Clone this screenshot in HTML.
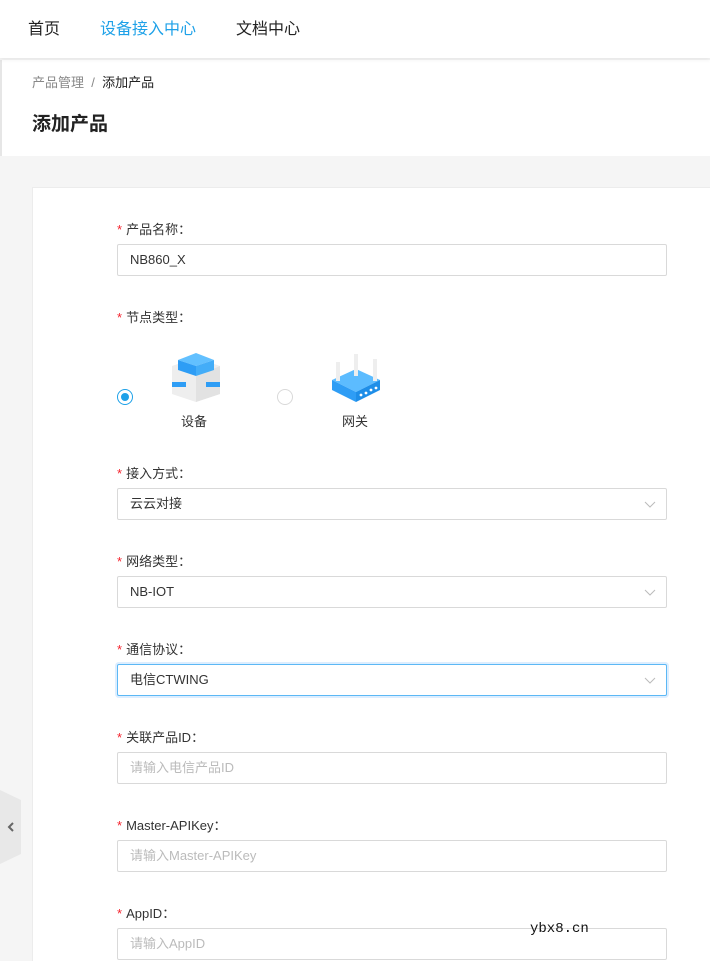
<!DOCTYPE html>
<html style="overflow:hidden;height:961px"><head><meta charset="utf-8"><style>
*{margin:0;padding:0;box-sizing:border-box}
body{width:710px;height:961px;overflow:hidden;background:#f5f5f5;font-family:"Liberation Sans","Noto Sans CJK SC",sans-serif;position:relative;color:#333}
.nav{position:absolute;left:0;top:0;width:710px;height:58px;background:#fff;box-shadow:0 2px 4px rgba(0,0,0,.06);z-index:2}
.nav span{position:absolute;top:15px;font-size:16px;color:#222}
.head{position:absolute;left:0;top:60px;width:710px;height:96px;background:#fff;border-left:2px solid #e6e6e6}
.bc{position:absolute;left:30px;top:12px;font-size:13px;color:#888}
.bc b{font-weight:normal;color:#222}
.title{position:absolute;left:30px;top:49px;font-size:19px;font-weight:bold;color:#222}
.card{position:absolute;left:32px;top:187px;width:690px;height:774px;background:#fff;border:1px solid #ececec;border-bottom:none}
.lbl{position:absolute;left:117px;font-size:13px;color:#333}
.lbl i{font-style:normal;color:#f5222d;margin-right:4px}
.inp{position:absolute;left:117px;width:550px;height:32px;border:1px solid #d9d9d9;border-radius:2px;font-size:13px;padding:0 12px;line-height:29px;color:#333;background:#fff}
.ph{color:#bbb}
.arr{position:absolute;right:10px;top:9px;width:12px;height:12px}
.focus{border-color:#5cb8f5;box-shadow:0 0 0 2px rgba(24,144,255,.15)}
</style></head><body>
<div class="nav"><span style="left:28px">首页</span><span style="left:100px;color:#1ea1e8">设备接入中心</span><span style="left:236px">文档中心</span></div>
<div class="head"><div class="bc">产品管理 &nbsp;/&nbsp; <b>添加产品</b></div><div class="title">添加产品</div></div>
<div class="card"></div>
<div class="lbl" style="top:219px"><i>*</i>产品名称：</div>
<div class="inp" style="top:244px">NB860_X</div>
<div class="lbl" style="top:307px"><i>*</i>节点类型：</div>
<div style="position:absolute;left:117px;top:389px;width:16px;height:16px;border:1px solid #1ea1e8;border-radius:50%"><div style="position:absolute;left:3px;top:3px;width:8px;height:8px;border-radius:50%;background:#1ea1e8"></div></div>
<svg style="position:absolute;left:170px;top:352px" width="52" height="50" viewBox="0 0 52 50">
<polygon points="2,14 26,6 50,14 50,42 26,50 2,42" fill="#eee"/>
<polygon points="26,24 50,14 50,42 26,50" fill="#e2e2e2"/>
<polygon points="8,8 26,1 44,8 26,14" fill="#62c0ff"/>
<polygon points="8,8 26,14 26,24 8,18" fill="#2e9df5"/>
<polygon points="26,14 44,8 44,18 26,24" fill="#43adf8"/>
<rect x="2" y="30" width="14" height="5" fill="#2e9df5"/><rect x="36" y="30" width="14" height="5" fill="#2e9df5"/>
</svg>
<div style="position:absolute;left:181px;top:411px;font-size:13px">设备</div>
<div style="position:absolute;left:277px;top:389px;width:16px;height:16px;border:1px solid #d9d9d9;border-radius:50%"></div>
<svg style="position:absolute;left:330px;top:352px" width="52" height="50" viewBox="0 0 52 50">
<polygon points="2,28 26,17 50,28 26,40" fill="#5cbcff"/>
<polygon points="2,28 26,40 26,50 2,38" fill="#2e9df5"/>
<polygon points="26,40 50,28 50,38 26,50" fill="#1e8ee8"/>
<rect x="6" y="10" width="4" height="19" fill="#eee"/><rect x="24" y="2" width="4" height="22" fill="#eee"/><rect x="43" y="7" width="4" height="22" fill="#eee"/>
<circle cx="31" cy="43" r="1.4" fill="#fff"/><circle cx="36" cy="41" r="1.4" fill="#fff"/><circle cx="41" cy="38" r="1.4" fill="#fff"/><circle cx="46" cy="36" r="1.4" fill="#fff"/>
</svg>
<div style="position:absolute;left:342px;top:411px;font-size:13px">网关</div>
<div class="lbl" style="top:463px"><i>*</i>接入方式：</div>
<div class="inp" style="top:488px">云云对接<svg class="arr" viewBox="0 0 12 12"><path d="M1 4l5 5 5-5" fill="none" stroke="#bbb"/></svg></div>
<div class="lbl" style="top:551px"><i>*</i>网络类型：</div>
<div class="inp" style="top:576px">NB-IOT<svg class="arr" viewBox="0 0 12 12"><path d="M1 4l5 5 5-5" fill="none" stroke="#bbb"/></svg></div>
<div class="lbl" style="top:639px"><i>*</i>通信协议：</div>
<div class="inp focus" style="top:664px">电信CTWING<svg class="arr" viewBox="0 0 12 12"><path d="M1 4l5 5 5-5" fill="none" stroke="#bbb"/></svg></div>
<div class="lbl" style="top:727px"><i>*</i>关联产品ID：</div>
<div class="inp ph" style="top:752px">请输入电信产品ID</div>
<div class="lbl" style="top:815px"><i>*</i>Master-APIKey：</div>
<div class="inp ph" style="top:840px">请输入Master-APIKey</div>
<div class="lbl" style="top:903px"><i>*</i>AppID：</div>
<div class="inp ph" style="top:928px">请输入AppID</div>
<svg style="position:absolute;left:0;top:790px" width="22" height="74"><polygon points="0,0 21,10 21,64 0,74" fill="#e8e8e8"/><path d="M13 33l-4 4 4 4" fill="none" stroke="#666" stroke-width="2"/></svg>
<div style="position:absolute;left:530px;top:921px;font-family:'Liberation Mono',monospace;font-size:14px;color:#111">ybx8.cn</div>
</body></html>
